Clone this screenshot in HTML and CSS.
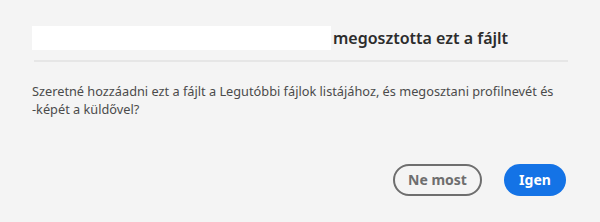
FILE: index.html
```html
<!DOCTYPE html>
<html lang="hu">
<head>
<meta charset="utf-8">
<link rel="stylesheet" href="styles.css">
</head>
<body>
<div class="dialog">
  <div class="header">
    <div class="name-box"></div>
    <h1 class="title">megosztotta ezt a fájlt</h1>
  </div>
  <div class="divider"></div>
  <p class="message">Szeretné hozzáadni ezt a fájlt a Legutóbbi fájlok listájához, és megosztani profilnevét és <span class="nobr">-képét</span> a küldővel?</p>
  <div class="actions">
    <button class="btn btn-secondary">Ne most</button>
    <button class="btn btn-primary">Igen</button>
  </div>
</div>
</body>
</html>
```
FILE: styles.css
```css
html, body {
  margin: 0;
  padding: 0;
  background: #f4f4f4;
}
body {
  font-family: "Noto Sans", "Open Sans", sans-serif;
  color: #2c2c2c;
}
.dialog {
  width: 600px;
  height: 222px;
  box-sizing: border-box;
  padding: 26px 32px 0 32px;
}
.header {
  display: flex;
  align-items: center;
  height: 24px;
}
.name-box {
  width: 299px;
  height: 24px;
  background: #ffffff;
}
.title {
  margin: 0 0 0 2px;
  font-size: 16px;
  font-weight: 600;
  color: #2c2c2c;
  line-height: 24px;
  white-space: nowrap;
}
.divider {
  margin: 10px 0 0 2px;
  width: 534px;
  height: 2px;
  background: #e6e6e6;
}
.message {
  margin: 20px 0 0 0;
  width: 540px;
  font-size: 12.75px;
  line-height: 18px;
  color: #4b4b4b;
}
.nobr {
  white-space: nowrap;
}
.actions {
  display: flex;
  justify-content: flex-end;
  gap: 22px;
  margin-top: 46px;
  padding-right: 2px;
}
.btn {
  height: 32px;
  border-radius: 16px;
  font-family: inherit;
  font-size: 14px;
  font-weight: 700;
  line-height: 1;
  box-sizing: border-box;
  cursor: pointer;
}
.btn-secondary {
  width: 89px;
  background: transparent;
  border: 2px solid #6e6e6e;
  color: #6e6e6e;
}
.btn-primary {
  width: 62px;
  background: #1473e6;
  border: none;
  color: #ffffff;
}
```
